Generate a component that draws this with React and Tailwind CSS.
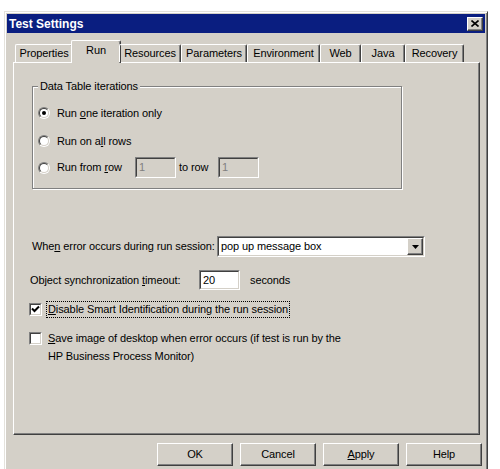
import React from "react";

const tabs = [
  { label: "Properties", w: "w-[58px]" },
  { label: "Run", w: "w-[50px]", active: true },
  { label: "Resources", w: "w-[62px]" },
  { label: "Parameters", w: "w-[66px]" },
  { label: "Environment", w: "w-[73px]" },
  { label: "Web", w: "w-[41px]" },
  { label: "Java", w: "w-[44px]" },
  { label: "Recovery", w: "w-[59px]" },
];

// sunken 3D frame used by edit boxes, checkboxes
const sunken =
  "border border-t-[#808080] border-l-[#808080] border-r-white border-b-white";
const sunkenInner =
  "border border-t-[#404040] border-l-[#404040] border-r-[#d4d0c8] border-b-[#d4d0c8]";
const raised =
  "border border-t-white border-l-white border-r-[#404040] border-b-[#404040] shadow-[inset_-1px_-1px_0_#808080]";

function Radio({ checked }) {
  return (
    <div className={`w-[12px] h-[12px] rounded-full shrink-0 ${sunken}`}>
      <div className={`w-full h-full rounded-full bg-white flex items-center justify-center ${sunkenInner}`}>
        {checked && <div className="w-[4px] h-[4px] rounded-full bg-black" />}
      </div>
    </div>
  );
}

function Checkbox({ checked }) {
  return (
    <div className={`w-[13px] h-[13px] shrink-0 ${sunken}`}>
      <div className={`w-full h-full bg-white ${sunkenInner}`}>
        {checked && (
          <svg width="9" height="9" viewBox="0 0 9 9">
            <path d="M1 3.5 L3.5 6 L8 1.5" stroke="#000" strokeWidth="2" fill="none" />
          </svg>
        )}
      </div>
    </div>
  );
}

function Field({ className, disabled, children }) {
  return (
    <div className={`${className} shrink-0 ${sunken}`}>
      <div className={`w-full h-full flex items-center pl-[2px] ${sunkenInner} ${disabled ? "bg-[#d4d0c8] text-[#808080]" : "bg-white"}`}>
        {children}
      </div>
    </div>
  );
}

function Button({ children }) {
  return (
    <button className={`w-[76px] h-[23px] bg-[#d4d0c8] flex items-center justify-center ${raised}`}>
      {children}
    </button>
  );
}

export default function App() {
  return (
    <div className="w-[500px] h-[469px] overflow-hidden bg-white pt-[11px] pl-[4px] font-['Liberation_Sans',Arial,sans-serif] text-[11px] tracking-[-0.1px] text-black leading-none whitespace-nowrap">
      <div className="w-[484px] h-[470px] bg-[#d4d0c8] border border-t-[#e4e2dc] border-l-[#e4e2dc] border-r-[#404040] border-b-[#404040] shadow-[inset_1px_1px_0_#fff,inset_-1px_0_0_#808080] p-[2px] flex flex-col">
        {/* title bar */}
        <div className="h-[19px] bg-[#0a1e80] flex items-center justify-between pl-[2px] pr-[2px]">
          <span className="text-white font-bold text-[12px] tracking-normal">Test Settings</span>
          <div className={`w-[16px] h-[14px] bg-[#d4d0c8] flex items-center justify-center ${raised}`}>
            <svg width="8" height="7" viewBox="0 0 8 7">
              <path d="M0.5 0.5 L7.5 6.5 M7.5 0.5 L0.5 6.5" stroke="#000" strokeWidth="1.6" />
            </svg>
          </div>
        </div>

        {/* tab strip */}
        <div className="mt-[7px] ml-[6px] pl-[2px] h-[22px] flex items-end relative z-10">
          {tabs.map((t) =>
            t.active ? (
              <div
                key={t.label}
                className={`${t.w} -mx-[2px] h-[23px] -mb-[1px] bg-[#d4d0c8] border-t border-l border-t-white border-l-white border-r border-r-[#404040] shadow-[inset_-1px_0_0_#808080] rounded-t-[2px] flex items-center justify-center pb-[3px]`}
              >
                {t.label}
              </div>
            ) : (
              <div
                key={t.label}
                className={`${t.w} h-[18px] border-t border-l border-t-white border-l-white border-r border-r-[#404040] shadow-[inset_-1px_0_0_#808080] rounded-t-[2px] flex items-center justify-center`}
              >
                {t.label}
              </div>
            )
          )}
        </div>

        {/* tab page */}
        <div className="ml-[6px] w-[467px] h-[373px] border border-t-white border-l-white border-r-[#404040] border-b-[#404040] shadow-[inset_-1px_-1px_0_#808080] pl-[18px] flex flex-col">
          <div className="relative mt-[23px] w-[370px] h-[103px] border border-[#808080] shadow-[inset_1px_1px_0_#fff,1px_1px_0_#fff] pl-[5px] pt-[18px] flex flex-col">
            <span className="absolute -top-[7px] left-[5px] px-[2px] bg-[#d4d0c8] leading-[13px]">Data Table iterations</span>
            <div className="h-[16px] flex items-center gap-[7px]">
              <Radio checked />
              <span>Run <u>o</u>ne iteration only</span>
            </div>
            <div className="mt-[12px] h-[16px] flex items-center gap-[7px]">
              <Radio />
              <span>Run on a<u>l</u>l rows</span>
            </div>
            <div className="mt-[8px] h-[21px] flex items-center">
              <Radio />
              <span className="ml-[7px] w-[78px]">Run from <u>r</u>ow</span>
              <Field className="w-[41px] h-[21px]" disabled>1</Field>
              <span className="ml-[3px] w-[39px]">to row</span>
              <Field className="w-[41px] h-[21px]" disabled>1</Field>
            </div>
          </div>

          <div className="mt-[47px] h-[21px] flex items-center">
            <span className="w-[185px] shrink-0">Whe<u>n</u> error occurs during run session:</span>
            <Field className="w-[208px] h-[21px]">
              <span className="flex-1">pop up message box</span>
              <div className={`w-[16px] h-full bg-[#d4d0c8] flex items-center justify-center ${raised}`}>
                <svg width="7" height="4" viewBox="0 0 7 4">
                  <path d="M0 0 H7 L3.5 4 Z" fill="#000" />
                </svg>
              </div>
            </Field>
          </div>

          <div className="mt-[13px] h-[20px] flex items-center">
            <span className="w-[167px] shrink-0 -ml-[2px]">Object synchronization <u>t</u>imeout:</span>
            <Field className="ml-[2px] w-[41px] h-[20px]">20</Field>
            <span className="ml-[10px]">seconds</span>
          </div>

          <div className="mt-[11px] h-[17px] -ml-[3px] flex items-center">
            <Checkbox checked />
            <span className="ml-[4px] h-[17px] px-[1px] border border-dotted border-black flex items-center">
              <u>D</u>isable Smart Identification during the run session
            </span>
          </div>

          <div className="mt-[11px] -ml-[3px] flex items-start">
            <div className="mt-[3px]">
              <Checkbox />
            </div>
            <span className="ml-[6px] leading-[18px]">
              <u>S</u>ave image of desktop when error occurs (if test is run by the
              <br />
              HP Business Process Monitor)
            </span>
          </div>
        </div>

        {/* dialog buttons */}
        <div className="mt-[8px] pr-[3px] flex justify-end gap-[7px]">
          <Button>OK</Button>
          <Button>Cancel</Button>
          <Button>
            <span><u>A</u>pply</span>
          </Button>
          <Button>Help</Button>
        </div>
      </div>
    </div>
  );
}
